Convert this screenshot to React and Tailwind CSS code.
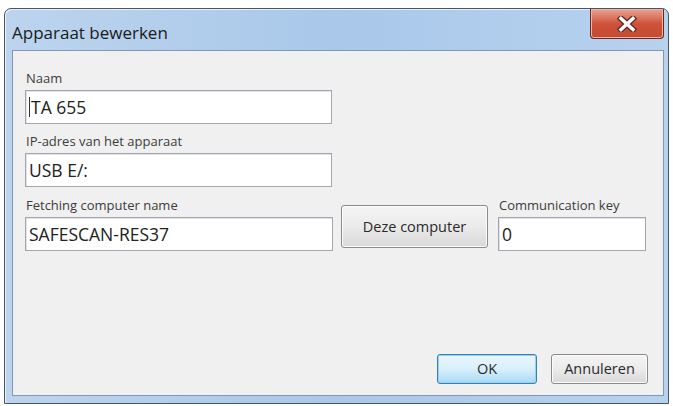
import React from "react";

const font = { fontFamily: '"Open Sans", "Noto Sans", Arial, sans-serif' };

function Field({ label, value, cursor, className = "", labelClass = "" }) {
  return (
    <div className={className}>
      <div className={"h-[23px] pl-[1px] text-[13px] leading-[23px] text-[#3c3c3c] " + labelClass}>{label}</div>
      <div className="flex h-[34px] items-center border border-[#a3a6ad] bg-white pl-[3px] text-[17.5px] text-[#222] shadow-[inset_1px_1px_0_#e2e3ea]">
        {cursor && <span className="mr-[1px] h-[20px] w-px bg-[#333]" />}
        {value}
      </div>
    </div>
  );
}

function WinButton({ children, focused, className = "" }) {
  return (
    <button
      type="button"
      className={
        "flex items-center justify-center rounded-[3px] border text-[14.5px] text-[#2a2a2a] " +
        (focused
          ? "border-[#3c7fb1] bg-gradient-to-b from-[#eaf6fd] via-[#d9f0fc] to-[#a7d9f5] shadow-[inset_0_0_0_1px_#94d2f1] "
          : "border-[#8a8a8a] bg-gradient-to-b from-[#f4f4f4] via-[#ebebeb] to-[#d8d8d8] shadow-[inset_0_0_0_1px_#fcfcfc] ") +
        className
      }
    >
      {children}
    </button>
  );
}

export default function App() {
  return (
    <div className="h-[406px] w-[673px] overflow-hidden bg-white pt-[8px] pl-[4px] pr-[4px]" style={font}>
      {/* window frame */}
      <div className="flex h-[396px] flex-col rounded-t-[7px] border border-[#4a5563] bg-gradient-to-r from-[#bcd4ee] via-[#a9c8ea] to-[#b7d2ef] shadow-[inset_1px_1px_0_#e8f1fa]">
        {/* title bar */}
        <div className="flex h-[41px] shrink-0 items-start justify-between">
          <div className="pl-[7px] pt-[12px] text-[17px] leading-[24px] text-[#1b1b1b]">Apparaat bewerken</div>
          <div className="mr-[4px] flex h-[30px] w-[74px] items-center justify-center rounded-b-[4px] border border-t-0 border-[#6a2a22] bg-gradient-to-b from-[#e6a594] via-[#d0523b] to-[#c44a32] shadow-[inset_0_0_0_1px_#f0b4a4]">
            <svg width="20" height="16" viewBox="0 0 20 16">
              <path d="M4 2.5 L16 13.5 M16 2.5 L4 13.5" stroke="#5a2a22" strokeWidth="6" strokeLinecap="square" />
              <path d="M4 2.5 L16 13.5 M16 2.5 L4 13.5" stroke="#ffffff" strokeWidth="3.5" strokeLinecap="square" />
            </svg>
          </div>
        </div>

        {/* client area */}
        <div className="ml-[7px] mr-[4px] flex flex-1 flex-col border border-[#8297b0] bg-[#f0f0f0] px-[12px] pt-[16px]">
          <Field label="Naam" value="TA 655" cursor className="w-[307px]" />
          <Field label="IP-adres van het apparaat" value="USB E/:" className="mt-[6px] w-[307px]" />
          <div className="mt-[7px] flex items-start">
            <Field label="Fetching computer name" value="SAFESCAN-RES37" className="w-[308px]" />
            <WinButton className="ml-[8px] mt-[11px] h-[43px] w-[147px]">Deze computer</WinButton>
            <Field label="Communication key" value="0" labelClass="text-[13.5px]" className="ml-[10px] w-[148px]" />
          </div>
          <div className="mt-auto mb-[11px] flex justify-end gap-[14px] pr-[3px]">
            <WinButton focused className="h-[30px] w-[100px]">OK</WinButton>
            <WinButton className="h-[30px] w-[97px]">Annuleren</WinButton>
          </div>
        </div>
        <div className="h-[7px] shrink-0" />
      </div>
    </div>
  );
}
